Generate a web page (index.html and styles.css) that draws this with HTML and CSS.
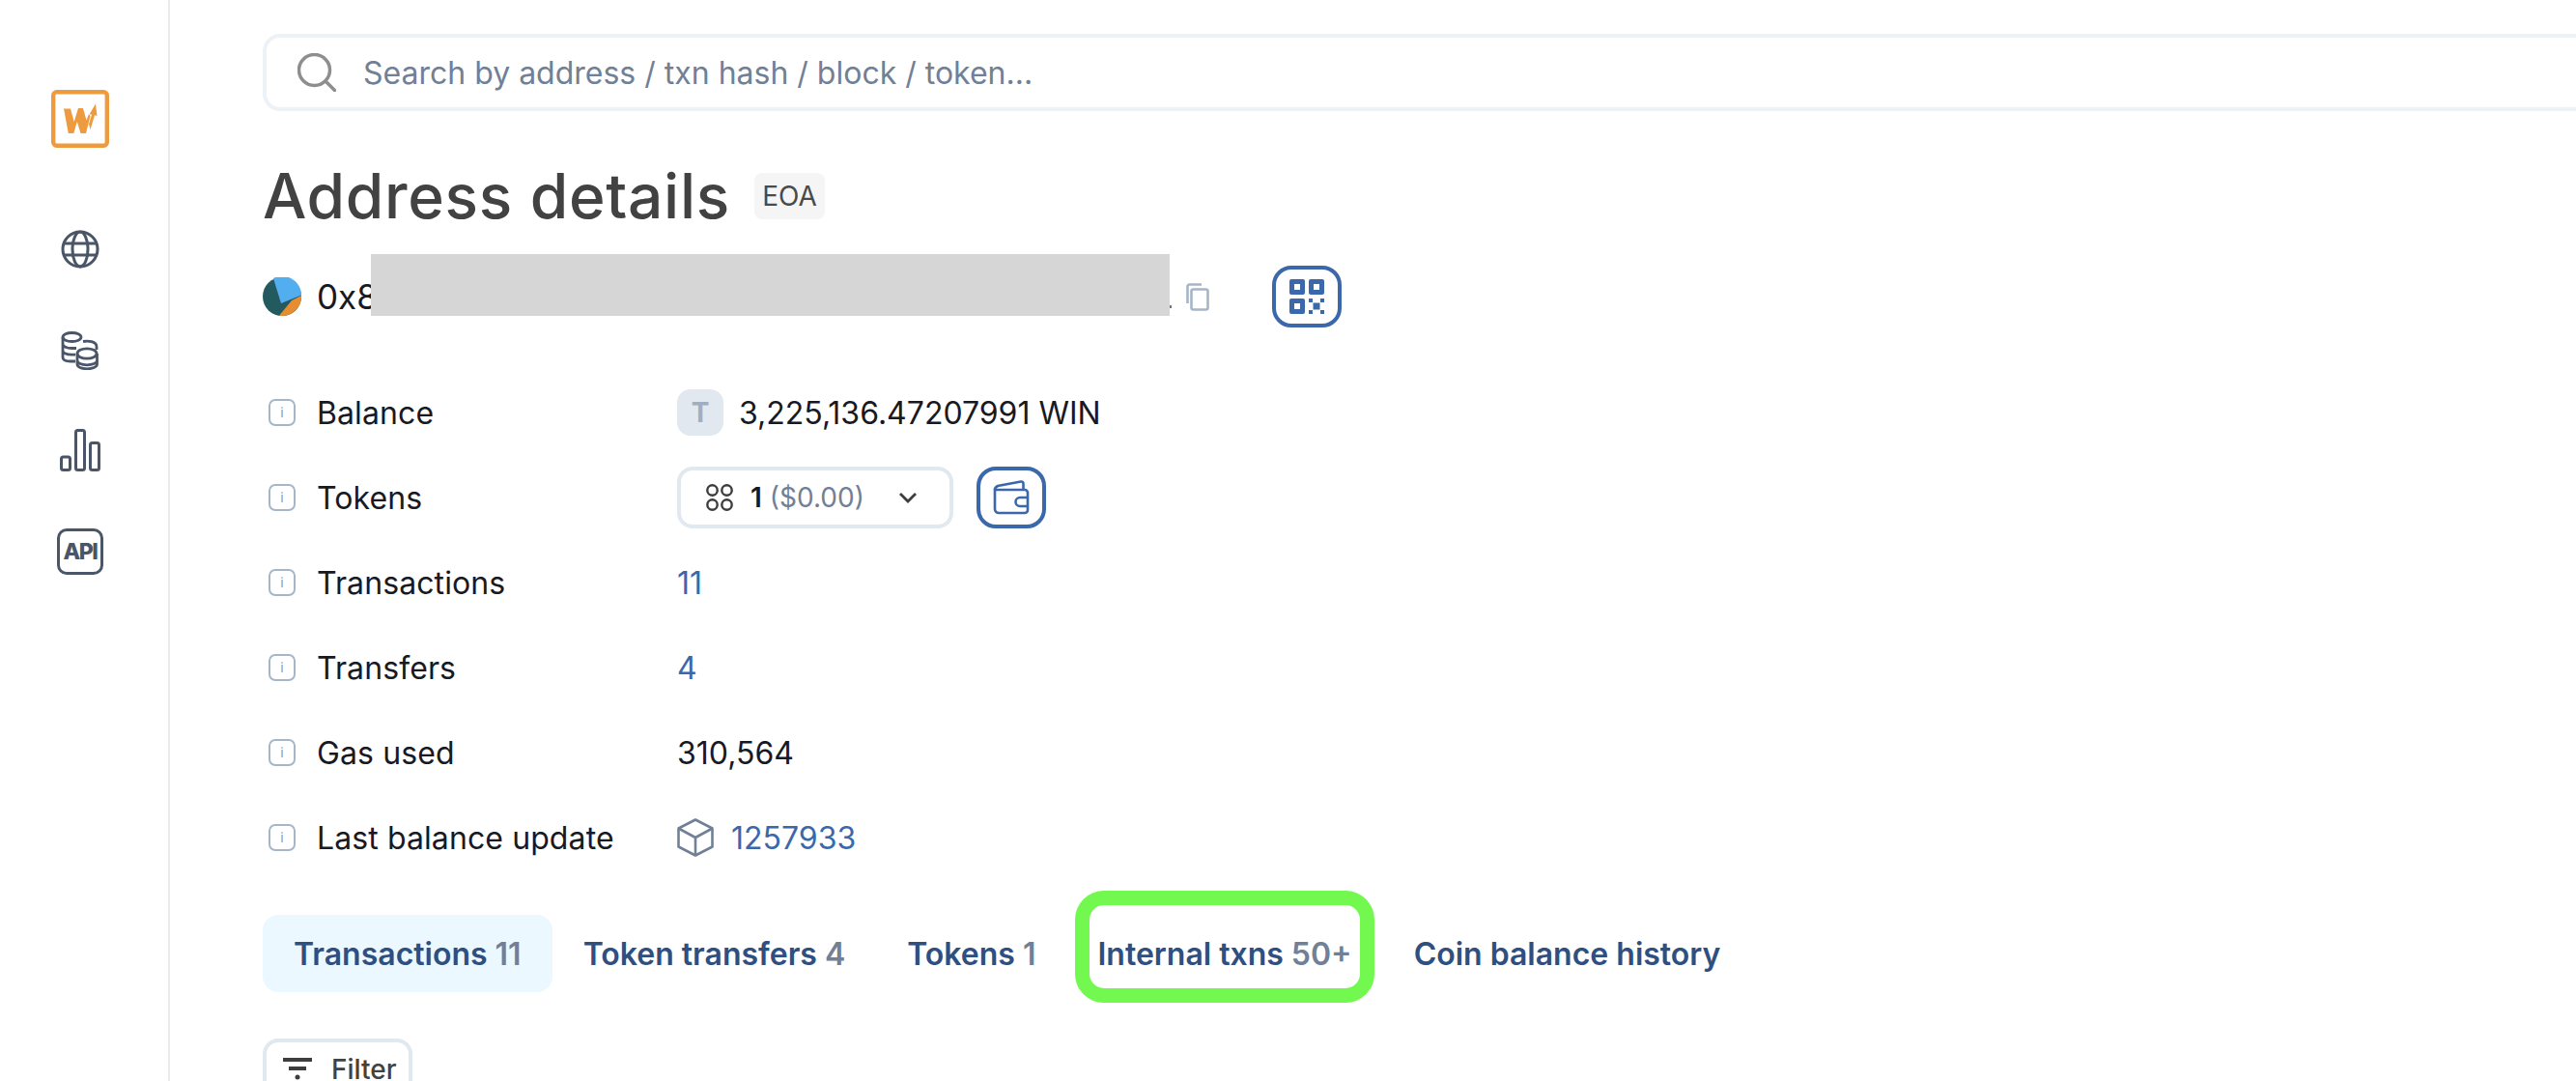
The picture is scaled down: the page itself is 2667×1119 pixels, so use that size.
FILE: index.html
```html
<!DOCTYPE html>
<html lang="en">
<head>
<meta charset="utf-8">
<title>Address details</title>
<link rel="stylesheet" href="styles.css">
</head>
<body>
<div class="app">
  <aside class="sidebar">
    <svg class="logo" viewBox="0 0 60 60">
      <rect x="2.200" y="2.200" width="55.600" height="55.600" rx="3.500" fill="none" stroke="#ed9b3e" stroke-width="4.400"/>
      <path fill="#ed9b3e" d="M13 19.500h7l3.700 13.500 4.300-14h5l3.500 12.500 2.500-6.500 1.500 2-4.500 18h-5.500l-3.700-12-3.500 12h-5.500z"/>
      <path fill="#ed9b3e" d="M46 14.500l1.500 12.500-2.500-.8-4.500 15-1.500-6 3-9.500-2.300-.6z"/>
    </svg>
    <nav class="side-nav">
      <svg class="nav-icon globe" viewBox="0 0 40 40" fill="none" stroke="#4a5568" stroke-width="3"><circle cx="20" cy="20" r="18"/><ellipse cx="20" cy="20" rx="8" ry="18"/><path d="M3 14h34M3 26h34"/></svg>
      <svg class="nav-icon coins" viewBox="0 0 40 40" fill="none" stroke="#4a5568" stroke-width="2.800"><ellipse cx="11.500" cy="6" rx="9.500" ry="4.500"/><path d="M2 6v21c0 2.500 3.500 4 8 4h5M2 13c0 2.500 4 4.500 9.500 4.500H16M2 20c0 2.500 4 4.200 9.500 4.200H15M23 10.500c5-.8 14-.5 14 5.500v3"/><ellipse cx="27" cy="23" rx="10" ry="5.200"/><path d="M17 23v11c0 3 4.500 4.800 10 4.800s10.500-1.800 10.500-4.800V23M17 30c0 3 4.500 4.800 10 4.800s10.500-1.800 10.500-4.800"/></svg>
      <svg class="nav-icon bars" viewBox="0 0 42 44" fill="none" stroke="#4a5568" stroke-width="3"><rect x="1.500" y="29" width="9" height="13.500" rx="2"/><rect x="16.500" y="1.500" width="9" height="41" rx="2"/><rect x="31.500" y="14.500" width="9" height="28" rx="2"/></svg>
      <div class="api-icon">API</div>
    </nav>
  </aside>
  <main class="main">
    <div class="search">
      <svg class="search-icon" viewBox="0 0 40 40" fill="none" stroke="#8e8e8e" stroke-width="3.500"><circle cx="17.500" cy="17.500" r="16"/><path d="M29.500 29.500l9 9" stroke-linecap="round"/></svg>
      <span class="search-text">Search by address / txn hash / block / token...</span>
    </div>
    <div class="title-row">
      <h1 class="title">Address details</h1>
      <span class="badge">EOA</span>
    </div>
    <div class="address-row">
      <svg class="pie" viewBox="0 0 40 40"><circle cx="20" cy="20" r="20" fill="#235a5f"/><path d="M11 1A20 20 0 0 1 40 18.500L19 27z" fill="#53aeef"/><path d="M40 19A20 20 0 0 1 17 39.800L30 24z" fill="#e78c31"/></svg>
      <span class="address">0x8</span>
      <div class="redaction"></div>
      <svg class="copy" viewBox="0 0 24 29" fill="none" stroke="#a7b5c8" stroke-width="2.600"><path d="M16 1.500H3.500a2 2 0 0 0-2 2V21"/><rect x="5.500" y="6.500" width="17" height="21" rx="2"/></svg>
      <button class="icon-btn qr-btn">
        <svg class="qr" viewBox="0 0 36 36"><path fill="#3b68aa" fill-rule="evenodd" d="M2 0h12a2 2 0 0 1 2 2v12a2 2 0 0 1-2 2H2a2 2 0 0 1-2-2V2a2 2 0 0 1 2-2zm3 5v6h6V5zM22 0h12a2 2 0 0 1 2 2v12a2 2 0 0 1-2 2H22a2 2 0 0 1-2-2V2a2 2 0 0 1 2-2zm3 5v6h6V5zM2 20h12a2 2 0 0 1 2 2v12a2 2 0 0 1-2 2H2a2 2 0 0 1-2-2V22a2 2 0 0 1 2-2zm3 5v6h6v-6z"/><path fill="#3b68aa" d="M20 20h4v4h-4zM32 20h4v4h-4zM24.500 24.500h7v7h-7zM20 32h4v4h-4zM32 32h4v4h-4z"/></svg>
      </button>
    </div>
    <div class="details">
      <div class="row">
        <div class="label"><span class="info">i</span>Balance</div>
        <div class="value"><span class="token-icon">T</span>3,225,136.47207991 WIN</div>
      </div>
      <div class="row">
        <div class="label"><span class="info">i</span>Tokens</div>
        <div class="value tokens-value">
          <button class="select">
            <svg class="four" viewBox="0 0 28 28" fill="none" stroke="#3d3d3d" stroke-width="2.400"><circle cx="6.500" cy="6.500" r="5.200"/><circle cx="21.500" cy="6.500" r="5.200"/><circle cx="6.500" cy="21.500" r="5.200"/><circle cx="21.500" cy="21.500" r="5.200"/></svg>
            <span class="count">1</span>
            <span class="usd">($0.00)</span>
            <svg class="chev" viewBox="0 0 20 12" fill="none" stroke="#3d3d3d" stroke-width="2.800"><path d="M2 2l8 8 8-8"/></svg>
          </button>
          <button class="icon-btn wallet-btn">
            <svg class="wallet" viewBox="0 0 38 36" fill="none" stroke="#3b68aa" stroke-width="2.600"><path d="M2 10c0-2 1-3 3-4L29 1.500c1.500-.2 2.500.8 2.500 2.500v5"/><path d="M2 10h31a3 3 0 0 1 3 3v18a3 3 0 0 1-3 3H6a4 4 0 0 1-4-4z"/><path d="M36 18H28a4.500 4.500 0 0 0 0 9h8"/></svg>
          </button>
        </div>
      </div>
      <div class="row">
        <div class="label"><span class="info">i</span>Transactions</div>
        <div class="value"><a class="link">11</a></div>
      </div>
      <div class="row">
        <div class="label"><span class="info">i</span>Transfers</div>
        <div class="value"><a class="link">4</a></div>
      </div>
      <div class="row">
        <div class="label"><span class="info">i</span>Gas used</div>
        <div class="value">310,564</div>
      </div>
      <div class="row">
        <div class="label"><span class="info">i</span>Last balance update</div>
        <div class="value">
          <svg class="cube" viewBox="0 0 38 40" fill="none" stroke="#718096" stroke-width="2.600" stroke-linejoin="round"><path d="M19 1.500L36.500 10.500V29.500L19 38.500 1.500 29.500V10.500z"/><path d="M1.500 10.500L19 20l17.500-9.500M19 20v18.500"/></svg>
          <a class="link">1257933</a>
        </div>
      </div>
    </div>
    <div class="tabs">
      <div class="tab active">Transactions <span class="num">11</span></div>
      <div class="tab">Token transfers <span class="num">4</span></div>
      <div class="tab">Tokens <span class="num">1</span></div>
      <div class="tab marked">Internal txns <span class="num">50+</span><div class="highlight"></div></div>
      <div class="tab">Coin balance history</div>
    </div>
    <button class="filter">
      <svg class="filter-icon" viewBox="0 0 30 24"><path fill="#3d3d3d" d="M0 0h30v4H0zM6 9h18v4H6z"/><circle cx="15" cy="20" r="2.500" fill="#3d3d3d"/></svg>
      Filter
    </button>
  </main>
</div>
</body>
</html>
```

FILE: styles.css
```css
* { box-sizing: border-box; }
html, body { margin: 0; height: 100%; overflow: hidden; background: #fff; }
body { font-family: Inter, "Liberation Sans", sans-serif; color: #171923; font-size: 32px; }
button { font-family: inherit; background: #fff; padding: 0; margin: 0; }
.app { display: flex; height: 1119px; overflow: hidden; }

.sidebar { width: 176px; flex: none; border-right: 2px solid #e9ebee; display: flex; flex-direction: column; align-items: center; padding-top: 93px; padding-right: 8px; }
.logo { width: 60px; height: 60px; display: block; }
.side-nav { display: flex; flex-direction: column; align-items: center; margin-top: 85px; }
.nav-icon { display: block; }
.globe { width: 40px; height: 40px; }
.coins { width: 40px; height: 40px; margin-top: 65px; }
.bars { width: 42px; height: 44px; margin-top: 61px; }
.api-icon { width: 48px; height: 48px; margin-top: 59px; border: 3.500px solid #4a5568; border-radius: 10px; color: #4a5568; font-size: 23px; font-weight: 800; display: flex; align-items: center; justify-content: center; letter-spacing: -1.500px; }

.main { flex: 1; min-width: 0; padding: 35px 0 0 96px; overflow: hidden; }
.search { width: calc(100% + 40px); height: 80px; border: 4px solid #edf2f7; border-radius: 18px; display: flex; align-items: center; padding-left: 32px; }
.search-icon { width: 40px; height: 40px; flex: none; }
.search-text { margin-left: 28px; color: #718096; font-size: 32px; white-space: nowrap; }

.title-row { display: flex; align-items: center; height: 64px; margin-top: 56px; }
.title { margin: 0; font-size: 64px; font-weight: 500; line-height: 64px; letter-spacing: 0.7px; color: #424242; white-space: nowrap; }
.badge { height: 48px; width: 73px; margin-left: 25px; background: #f5f5f5; border-radius: 8px; color: #4a4a4a; font-size: 28px; font-weight: 400; display: flex; align-items: center; justify-content: center; }

.address-row { display: flex; align-items: center; height: 64px; margin-top: 40px; position: relative; }
.pie { width: 40px; height: 40px; flex: none; }
.address { margin-left: 16px; font-size: 35px; font-weight: 400; }
.redaction { position: absolute; left: 112px; top: -12px; width: 827px; height: 64px; background: #d6d6d6; }
.redaction::after { content: ""; position: absolute; right: -2px; bottom: 8px; width: 2px; height: 3px; background: #777; }
.copy { width: 24px; height: 29px; flex: none; margin-left: 837px; }
.icon-btn { border: 4px solid #3b68aa; border-radius: 20px; display: flex; align-items: center; justify-content: center; flex: none; }
.qr-btn { width: 72px; height: 64px; margin-left: 65px; }
.qr { width: 36px; height: 36px; }

.details { margin-top: 44px; }
.row { display: flex; align-items: center; height: 88px; }
.label { width: 429px; flex: none; display: flex; align-items: center; white-space: nowrap; letter-spacing: 0.1px; }
.info { width: 28px; height: 28px; margin-left: 6px; margin-right: 22px; border: 2.500px solid #a7b5c8; border-radius: 7px; color: #8d9db3; font-size: 14px; line-height: 1; display: flex; align-items: center; justify-content: center; flex: none; }
.value { display: flex; align-items: center; white-space: nowrap; }
.token-icon { width: 48px; height: 48px; margin-right: 16px; background: #e2e8f0; border-radius: 14px; color: #a0aec0; font-size: 28px; font-weight: 700; display: flex; align-items: center; justify-content: center; flex: none; }
.link { color: #3b68aa; }
.tokens-value { gap: 24px; }
.select { width: 286px; height: 64px; border: 4px solid #e2e8f0; border-radius: 16px; display: flex; align-items: center; padding-left: 26px; font-size: 28px; color: #171923; }
.four { width: 28px; height: 28px; flex: none; }
.count { margin-left: 18px; font-weight: 600; }
.usd { margin-left: 8px; color: #718096; }
.chev { width: 20px; height: 12px; margin-left: auto; margin-right: 33px; flex: none; }
.wallet-btn { width: 72px; height: 64px; }
.wallet { width: 38px; height: 36px; }
.cube { width: 38px; height: 40px; margin-right: 18px; flex: none; }

.tabs { display: flex; align-items: center; margin-top: 36px; height: 80px; }
.tab { position: relative; height: 80px; padding: 0 32px; display: flex; align-items: center; gap: 8px; white-space: nowrap; color: #2f4f80; font-weight: 600; border-radius: 16px; }
.tab.active { background: #ebf8ff; }
.num { color: #718096; }
.highlight { position: absolute; left: 9px; top: -25px; right: 9px; bottom: -11px; border: 15px solid #72f84f; border-radius: 30px; }
.filter { display: flex; align-items: center; width: 155px; height: 64px; margin-top: 48px; border: 4px solid #e2e8f0; border-radius: 16px; padding-left: 17px; font-size: 28px; font-weight: 500; color: #424242; gap: 20px; }
.filter-icon { width: 30px; height: 24px; flex: none; }
```
